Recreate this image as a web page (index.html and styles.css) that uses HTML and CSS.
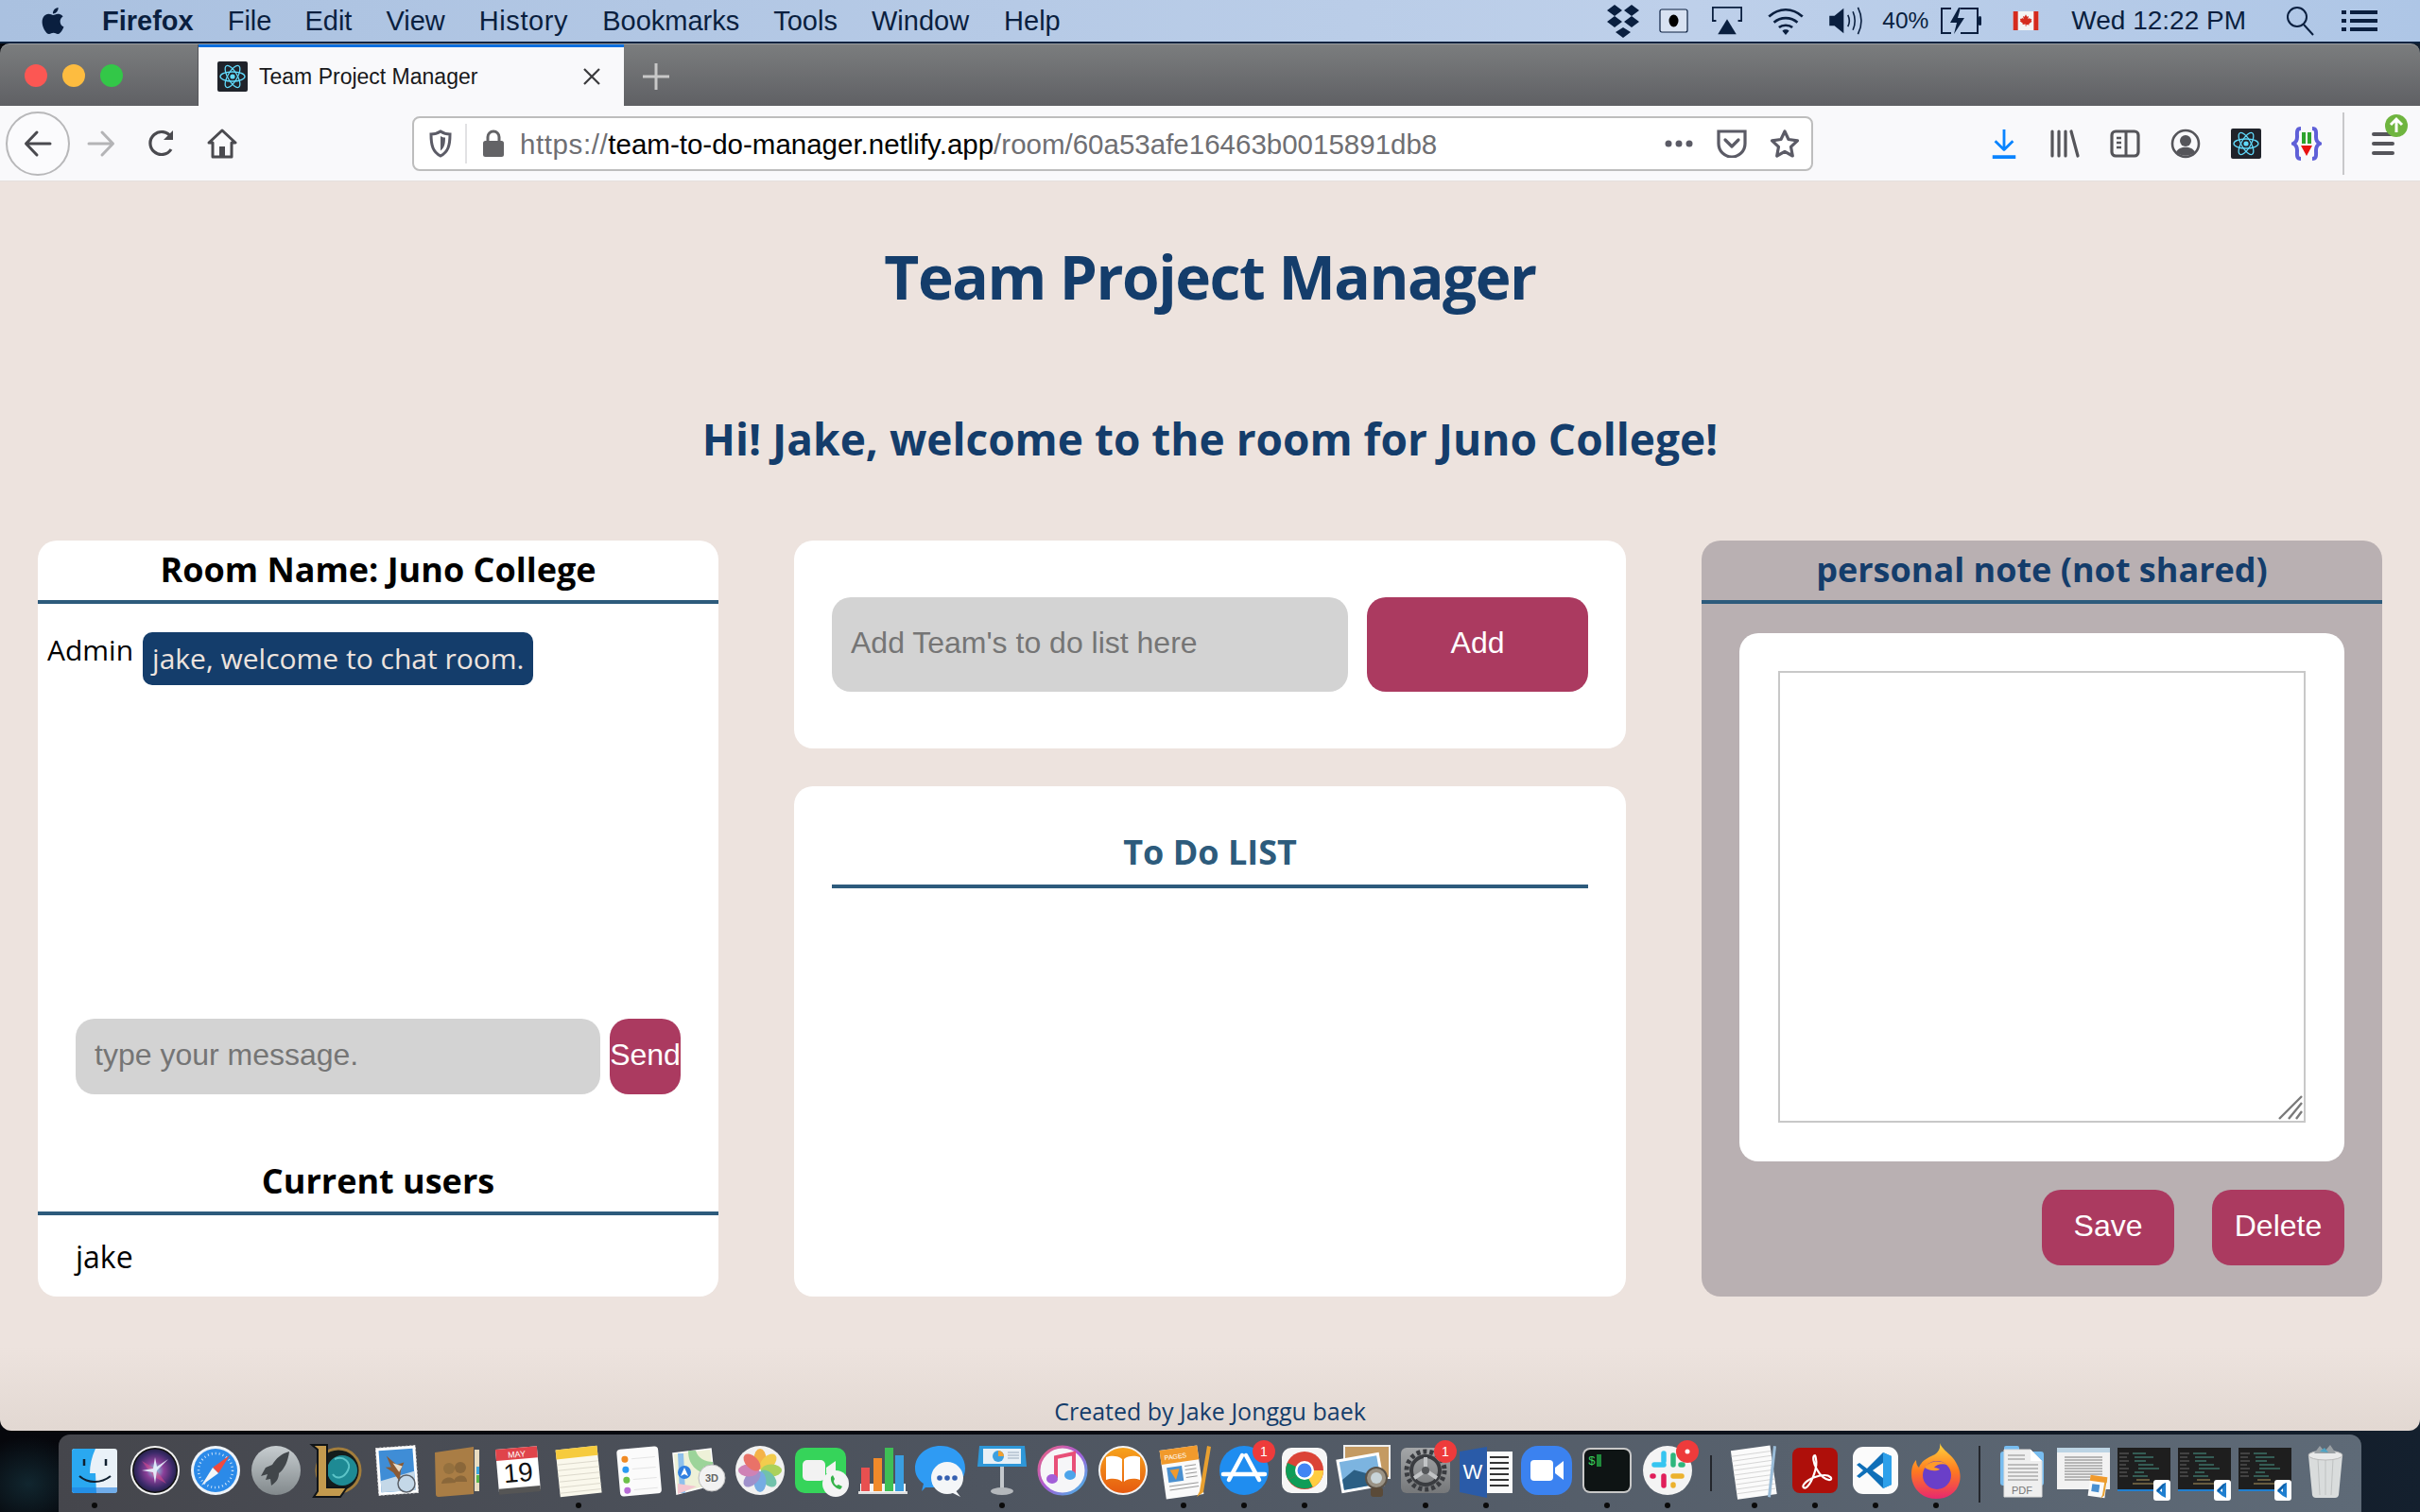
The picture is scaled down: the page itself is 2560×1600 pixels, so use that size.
FILE: index.html
```html
<!DOCTYPE html>
<html lang="en">
<head>
<meta charset="utf-8">
<title>Team Project Manager</title>
<link rel="stylesheet" href="styles.css">
</head>
<body>
<svg class="sprite" width="0" height="0" aria-hidden="true">
  <symbol id="react" viewBox="0 0 32 32">
    <rect width="32" height="32" rx="2" fill="#20232a"/>
    <g fill="none" stroke="#61dafb" stroke-width="1.3">
      <ellipse cx="16" cy="16" rx="13" ry="5"/>
      <ellipse cx="16" cy="16" rx="13" ry="5" transform="rotate(60 16 16)"/>
      <ellipse cx="16" cy="16" rx="13" ry="5" transform="rotate(120 16 16)"/>
    </g>
    <circle cx="16" cy="16" r="2.6" fill="#61dafb"/>
  </symbol>
  <symbol id="thumb" viewBox="0 0 64 64">
    <rect x="4" y="6" width="56" height="46" fill="#1e1e1e"/>
    <rect x="4" y="50" width="56" height="2" fill="#1f7fd0"/>
    <g stroke-width="1.2">
      <path d="M6 12h10M6 16h8M6 20h10M6 24h7M6 28h10M6 32h8M6 36h9" stroke="#666"/>
      <path d="M20 12h14M22 16h20M22 20h12M26 24h16M26 28h22M22 32h10M20 36h16" stroke="#4a9a8a"/>
      <path d="M24 40h14M20 44h22" stroke="#b09a60"/>
    </g>
    <rect x="42" y="40" width="18" height="22" rx="3" fill="#fff"/>
    <path d="M55 43v16l-4-2-6-5 2-2 4 3v-8z" fill="#1f7fd0"/>
    <path d="M55 43l-4 2-6 6 2 2 4-4z" fill="#0f5fa8"/>
  </symbol>
</svg>
<div class="screen">
  <header class="menubar">
    <svg class="apple" viewBox="0 0 24 24"><path d="M12.152 6.896c-.948 0-2.415-1.078-3.96-1.04-2.04.027-3.91 1.183-4.961 3.014-2.117 3.675-.546 9.103 1.519 12.09 1.013 1.454 2.208 3.09 3.792 3.039 1.52-.065 2.09-.987 3.935-.987 1.831 0 2.35.987 3.96.948 1.637-.026 2.676-1.48 3.676-2.948 1.156-1.688 1.636-3.325 1.662-3.415-.039-.013-3.182-1.221-3.22-4.857-.026-3.04 2.48-4.494 2.597-4.559-1.429-2.09-3.623-2.324-4.39-2.376-2-.156-3.675 1.09-4.61 1.09zM15.53 3.83c.843-1.012 1.4-2.427 1.245-3.83-1.207.052-2.662.805-3.532 1.818-.78.896-1.454 2.338-1.273 3.714 1.338.104 2.715-.688 3.559-1.701"/></svg>
    <nav class="menus">
      <span class="app-name">Firefox</span><span>File</span><span class="menu-edit">Edit</span><span>View</span><span class="menu-wide">History</span><span>Bookmarks</span><span>Tools</span><span class="menu-window">Window</span><span>Help</span>
    </nav>
    <div class="status">
      <svg class="st-dropbox" viewBox="0 0 36 36"><path d="M9 1l8 6-8 6-8-6zM27 1l8 6-8 6-8-6zM9 13l8 6-8 6-8-6zM27 13l8 6-8 6-8-6zM18 25l8 5-8 6-8-6z" fill="#0a1f3f"/></svg>
      <svg class="st-record" viewBox="0 0 32 32"><rect x="1" y="4" width="29" height="24" rx="2" fill="#d8e2f2" stroke="#0a1f3f" stroke-width="1.2"/><ellipse cx="15.500" cy="16" rx="5" ry="6.500" fill="#000"/></svg>
      <svg class="st-airplay" viewBox="0 0 40 36"><path d="M7 25H3V9h34v16h-4" transform="translate(0 -7)" fill="none" stroke="#0a1f3f" stroke-width="2"/><path d="M20 16l11 18H9z" fill="#0a1f3f"/></svg>
      <svg class="st-wifi" viewBox="0 0 44 36" fill="none" stroke="#0a1f3f" stroke-width="3"><path d="M2 13c12-11 28-11 40 0M8 20c8-7 20-7 28 0M14 26c4-3.500 12-3.500 16 0"/><path d="M22 35l-4-5c2-2 6-2 8 0z" fill="#0a1f3f" stroke="none"/></svg>
      <svg class="st-volume" viewBox="0 0 44 36" fill="none" stroke="#0a1f3f" stroke-width="1.800"><path d="M2 12h6l11-9v30l-11-9H2z" fill="#0a1f3f" stroke="none"/><path d="M24 11c2 4 2 10 0 14M30 7c3 7 3 15 0 22M36 2c5 10 5 22 0 32"/></svg>
      <span class="st-pct">40%</span>
      <svg class="st-battery" viewBox="0 0 44 30"><path d="M12 2H2v26h10M22 2h18v26H22" fill="none" stroke="#0a1f3f" stroke-width="2"/><path d="M20 1L11 17h7l-3 12 11-17h-7l3-11z" fill="#0a1f3f"/><rect x="41" y="10" width="3" height="10" rx="1.500" fill="#0a1f3f"/></svg>
      <svg class="st-flag" viewBox="0 0 32 24"><rect width="32" height="24" fill="#f4f4f4"/><rect width="6" height="24" fill="#d52b1e"/><rect x="26" width="6" height="24" fill="#d52b1e"/><path d="M16 4l1.500 3 2-1-.7 4 2.200-1.500.6 1.500 2-.3-.8 2.300 1 .8-3.800 3 .4 1.500-3.800-.5V19h-1v-2.700l-3.800.5.4-1.500-3.800-3 1-.8-.8-2.300 2 .3.6-1.500L13.200 10l-.7-4 2 1z" fill="#d52b1e"/></svg>
      <span class="st-clock">Wed 12:22 PM</span>
      <svg class="st-search" viewBox="0 0 32 32" fill="none" stroke="#0a1f3f" stroke-width="2"><circle cx="13" cy="12" r="10"/><path d="M20 20l10 11"/></svg>
      <svg class="st-list" viewBox="0 0 38 24" fill="#0a1f3f"><rect y="1" width="5" height="4"/><rect x="9" y="1" width="29" height="4"/><rect y="10" width="5" height="4"/><rect x="9" y="10" width="29" height="4"/><rect y="19" width="5" height="4"/><rect x="9" y="19" width="29" height="4"/></svg>
    </div>
  </header>

  <div class="tabstrip">
    <div class="traffic"><i class="light red"></i><i class="light yellow"></i><i class="light green"></i></div>
    <div class="tab">
      <svg class="favicon"><use href="#react"/></svg>
      <span class="tab-title">Team Project Manager</span>
      <svg class="tab-close" viewBox="0 0 20 20" fill="none" stroke="#3a3a3c" stroke-width="2.200"><path d="M2 2l16 16M18 2L2 18"/></svg>
    </div>
    <svg class="newtab" viewBox="0 0 28 28" stroke="#c8c8c8" stroke-width="3"><path d="M14 0v28M0 14h28"/></svg>
  </div>

  <div class="toolbar">
    <div class="navbtn back"><svg viewBox="0 0 32 32" fill="none" stroke="#4a4a4f" stroke-width="3" stroke-linecap="round" stroke-linejoin="round"><path d="M29 16H4M15 4L3.500 16 15 28"/></svg></div>
    <div class="navbtn"><svg viewBox="0 0 32 32" fill="none" stroke="#b4b4b6" stroke-width="3" stroke-linecap="round" stroke-linejoin="round"><path d="M3 16h25M17 4l11.500 12L17 28"/></svg></div>
    <div class="navbtn"><svg viewBox="0 0 32 32" fill="none" stroke="#4a4a4f" stroke-width="3.200"><path d="M26 22a12 12 0 1 1 0-13"/><path d="M28 2v10H18z" fill="#4a4a4f" stroke="none"/></svg></div>
    <div class="navbtn"><svg viewBox="0 0 32 32" fill="none" stroke="#4a4a4f" stroke-width="3" stroke-linejoin="round"><path d="M2 15L16 2l14 13h-4v15H6V15z"/><rect x="13" y="19" width="6" height="10" fill="#4a4a4f" stroke="none"/></svg></div>
    <div class="urlbar">
      <svg class="shield" viewBox="0 0 24 30"><path d="M12 2c3 2 6 3 10 3 0 12-2 19-10 23C4 24 2 17 2 5c4 0 7-1 10-3z" fill="none" stroke="#5b5b66" stroke-width="3"/><path d="M12 7c2 1 3 1.500 5 1.500 0 7-1 11-5 14z" fill="#5b5b66"/></svg>
      <i class="url-sep"></i>
      <svg class="lock" viewBox="0 0 24 30"><rect x="1" y="12" width="22" height="17" rx="2.500" fill="#636366"/><path d="M6 13V8a6 6 0 0 1 12 0v5" fill="none" stroke="#636366" stroke-width="3"/></svg>
      <span class="url"><span class="url-dim url-scheme">https://</span>team-to-do-manager.netlify.app<span class="url-dim">/room/60a53afe16463b0015891db8</span></span>
      <svg class="url-dots" viewBox="0 0 32 10" fill="#5b5b66"><circle cx="5" cy="5" r="3.500"/><circle cx="16" cy="5" r="3.500"/><circle cx="27" cy="5" r="3.500"/></svg>
      <svg class="pocket" viewBox="0 0 32 30" fill="none" stroke="#5b5b66" stroke-width="3.200"><path d="M2 2h28v13a14 14 0 0 1-28 0z"/><path d="M9 11l7 7 7-7" stroke-linecap="round" stroke-linejoin="round"/></svg>
      <svg class="star" viewBox="0 0 32 32" fill="none" stroke="#5b5b66" stroke-width="3.200" stroke-linejoin="round"><path d="M16 3l4 8.500 9.500 1.300-7 6.500 1.800 9.700-8.300-4.700L7.700 29l1.800-9.700-7-6.500L12 11.500z"/></svg>
    </div>
    <div class="tools">
      <div class="toolbtn"><svg viewBox="0 0 32 34" fill="none" stroke="#0a84ff" stroke-width="3"><path d="M16 1v23M6 14l10 10 10-10" stroke-linejoin="round"/><path d="M3 32h26" stroke-width="4"/></svg></div>
      <div class="toolbtn"><svg viewBox="0 0 32 32" stroke="#55555a" stroke-width="3.200" stroke-linecap="round"><path d="M3 3v26M10 3v26M17 3v26M23 3l7 26"/></svg></div>
      <div class="toolbtn"><svg viewBox="0 0 32 32" fill="none"><rect x="2" y="3" width="28" height="26" rx="4" stroke="#55555a" stroke-width="3.200"/><path d="M17 3v26" stroke="#55555a" stroke-width="3"/><path d="M7 10h5M7 15h5M7 20h5" stroke="#55555a" stroke-width="2.400"/></svg></div>
      <div class="toolbtn"><svg viewBox="0 0 32 32" fill="none"><circle cx="16" cy="16" r="14" stroke="#55555a" stroke-width="2.600"/><circle cx="16" cy="13" r="6" fill="#55555a"/><path d="M6 25c3-7 17-7 20 0-5 5-15 5-20 0z" fill="#55555a"/></svg></div>
      <div class="toolbtn"><svg class="ext-react"><use href="#react"/></svg></div>
      <div class="toolbtn"><svg class="ext-braces" viewBox="0 0 32 36" fill="none"><path d="M10 2C5 2 6 6 6 11s-4 7-4 7 4 2 4 7 -1 9 4 9M22 2c5 0 4 4 4 9s4 7 4 7-4 2-4 7 1 9-4 9" stroke="#5f60d8" stroke-width="4"/><rect x="11" y="6" width="4" height="12" fill="#2da32d"/><rect x="17" y="6" width="4" height="12" fill="#2da32d"/><path d="M10 20h12l-6 11z" fill="#e81010"/></svg></div>
      <i class="tool-sep"></i>
      <div class="menu-btn">
        <svg viewBox="0 0 26 32" fill="#55555a"><rect x="1" y="4" width="24" height="4" rx="2"/><rect x="1" y="14" width="24" height="4" rx="2"/><rect x="1" y="24" width="24" height="4" rx="2"/></svg>
        <svg class="update" viewBox="0 0 24 24"><circle cx="12" cy="12" r="12" fill="#6fb53f"/><path d="M12 19V6M6 11l6-6 6 6" fill="none" stroke="#fff" stroke-width="3"/></svg>
      </div>
    </div>
  </div>

  <main class="page">
    <h1 class="title">Team Project Manager</h1>
    <h2 class="welcome">Hi! Jake, welcome to the room for Juno College!</h2>
    <section class="board">
      <div class="card chat">
        <h3 class="panel-head">Room Name: Juno College</h3>
        <div class="messages">
          <div class="msg"><span class="sender">Admin</span><span class="bubble">jake, welcome to chat room.</span></div>
        </div>
        <form class="send-row">
          <input class="field" type="text" placeholder="type your message.">
          <button class="btn send" type="button">Send</button>
        </form>
        <h3 class="panel-head users-head">Current users</h3>
        <ul class="users"><li>jake</li></ul>
      </div>
      <div class="middle">
        <div class="card add-card">
          <input class="field add-field" type="text" placeholder="Add Team's to do list here">
          <button class="btn add" type="button">Add</button>
        </div>
        <div class="card todo-card">
          <h3 class="todo-head">To Do LIST</h3>
        </div>
      </div>
      <div class="card note">
        <h3 class="panel-head note-head">personal note (not shared)</h3>
        <div class="note-box">
          <textarea class="note-text"></textarea>
          <svg class="grip" viewBox="0 0 26 26" fill="none" stroke="#7a7a7a" stroke-width="2.400"><path d="M1 25L25 1M11 25L25 8M19 25l6-8"/></svg>
        </div>
        <div class="note-actions">
          <button class="btn note-btn" type="button">Save</button>
          <button class="btn note-btn" type="button">Delete</button>
        </div>
      </div>
    </section>
    <footer class="credit">Created by Jake Jonggu baek</footer>
  </main>

  <div class="desk">
    <div class="dock">
      <div class="dock-item on"><svg viewBox="0 0 64 64"><rect x="8" y="7" width="48" height="47" rx="3" fill="#e9f1f8"/><path d="M11 7h22c-4 9-6 17-6 26h6l1 21H11a3 3 0 0 1-3-3V10a3 3 0 0 1 3-3z" fill="#2aa8f0"/><path d="M8 48h48v3a3 3 0 0 1-3 3H11a3 3 0 0 1-3-3z" fill="#1f7fe0" opacity=".6"/><path d="M21 18v7M44 18v7" stroke="#102030" stroke-width="2.500"/><path d="M16 36c9 8 23 8 33 0" fill="none" stroke="#102030" stroke-width="2.200"/></svg></div>
      <div class="dock-item"><svg viewBox="0 0 64 64"><defs><radialGradient id="siri" cx=".5" cy=".5" r=".6"><stop offset="0" stop-color="#8ad8e8"/><stop offset=".35" stop-color="#8b3f98"/><stop offset=".7" stop-color="#3a2a68"/><stop offset="1" stop-color="#15192f"/></radialGradient></defs><circle cx="32" cy="30" r="26" fill="#f2f2f2"/><circle cx="32" cy="30" r="24" fill="#111"/><circle cx="32" cy="30" r="22.500" fill="url(#siri)"/><path d="M18 20l14 8 12 16-14-8z" fill="#d84b8c" opacity=".55"/><path d="M46 18L34 30l-2 14-2-12-12-2 12-2 2-12 2 10z" fill="#e8f4ff" opacity=".9"/></svg></div>
      <div class="dock-item"><svg viewBox="0 0 64 64"><circle cx="32" cy="30" r="26" fill="#eef3f8"/><circle cx="32" cy="30" r="23" fill="#2b8ae8"/><circle cx="32" cy="30" r="18" fill="none" stroke="#cfe4fa" stroke-width="2.500" stroke-dasharray="1 3"/><path d="M47 14L35 33 29 27z" fill="#ef4a3f"/><path d="M17 46l12-19 6 6z" fill="#f4f6f8"/></svg></div>
      <div class="dock-item"><svg viewBox="0 0 64 64"><defs><linearGradient id="lp" x1="0" y1="0" x2="0" y2="1"><stop offset="0" stop-color="#c7cdd0"/><stop offset="1" stop-color="#82898c"/></linearGradient></defs><circle cx="32" cy="30" r="26" fill="url(#lp)"/><path d="M46 10c-8 2-14 7-18 14l-7 3-5 9 7-2-2 6 5-1 1 7c6-4 8-8 8-13 6-4 10-14 11-23z" fill="#41464a"/></svg></div>
      <div class="dock-item"><svg viewBox="0 0 64 64"><circle cx="34" cy="30" r="23" fill="#141c1c" stroke="#a27d3c" stroke-width="3"/><circle cx="38" cy="30" r="16" fill="#1e8a94"/><path d="M30 18c10-4 18 4 14 12s-12 10-16 4" fill="none" stroke="#5cc4c8" stroke-width="2"/><path d="M6 3h16v45h21l-7 10H8l4-6V8z" fill="#c39a4e" stroke="#101418" stroke-width="2"/></svg></div>
      <div class="dock-item"><svg viewBox="0 0 64 64"><g transform="rotate(-4 32 30)"><rect x="11" y="5" width="42" height="50" fill="#fff" stroke="#ddd" stroke-dasharray="2 2"/><rect x="14" y="8" width="36" height="44" fill="#3f8dd6"/><path d="M14 40l36-8v20H14z" fill="#c4d8e8"/><path d="M22 14l10 10 8-2-4 8-2 12-6-10-8-6 6 0z" fill="#8a5a34"/><path d="M28 22l10 4-4 6z" fill="#e8dcc8"/></g><circle cx="42" cy="44" r="9" fill="none" stroke="#5a6068" stroke-width="1.500"/></svg></div>
      <div class="dock-item"><svg viewBox="0 0 64 64"><path d="M50 8h5v44h-5z" fill="#e8dcc0"/><rect x="52" y="26" width="3" height="8" fill="#3ba7e0"/><rect x="52" y="35" width="3" height="8" fill="#5ab84a"/><path d="M8 11l41-6v50L12 58a3 3 0 0 1-3-3z" fill="#a97d45"/><circle cx="23" cy="28" r="6" fill="#94703e"/><circle cx="35" cy="27" r="6" fill="#8a673a"/><path d="M15 44c1-8 13-9 15-1zM28 42c1-8 14-9 14 0z" fill="#8a673a"/></svg></div>
      <div class="dock-item"><svg viewBox="0 0 64 64"><g transform="rotate(-5 32 30)"><rect x="10" y="6" width="44" height="46" fill="#fff"/><rect x="10" y="6" width="44" height="12" fill="#e0444a"/><text class="cal-m" x="32" y="16" text-anchor="middle">MAY</text><text class="cal-d" x="32" y="42" text-anchor="middle">19</text><rect x="10" y="48" width="44" height="6" fill="#555"/></g></svg></div>
      <div class="dock-item on"><svg viewBox="0 0 64 64"><g transform="rotate(-6 32 30)"><rect x="10" y="6" width="44" height="50" fill="#faf8ec"/><rect x="10" y="6" width="44" height="10" fill="#f6cb3d"/><path d="M10 22h44M10 28h44M10 34h44M10 40h44M10 46h44M10 52h44" stroke="#dcd9cc" stroke-width="1"/></g></svg></div>
      <div class="dock-item"><svg viewBox="0 0 64 64"><g transform="rotate(-5 32 30)"><rect x="10" y="6" width="44" height="50" rx="4" fill="#fbfbfb"/><circle cx="18" cy="17" r="3.500" fill="#f08a24"/><circle cx="18" cy="28" r="3.500" fill="#2b9af3"/><circle cx="18" cy="39" r="3.500" fill="#6cc04a"/><circle cx="18" cy="50" r="3.500" fill="#b76cd6"/><path d="M25 17h25M25 28h25M25 39h25M25 50h25" stroke="#e4e4e4"/></g></svg></div>
      <div class="dock-item"><svg viewBox="0 0 64 64"><path d="M4 12l40-5 4 38-40 10z" fill="#eef1d8" stroke="#fff" stroke-width="1.500"/><path d="M28 9c2 8 10 12 18 12v14c-14-2-26-8-26-26z" fill="#9cd49a"/><path d="M9 12h6l2 42H11z" fill="#8dc0ec"/><path d="M9 44l20 3-20 8z" fill="#f4c6d0"/><circle cx="16" cy="32" r="7" fill="#2f7fe0"/><path d="M16 27l4 9-4-2-4 2z" fill="#fff"/><circle cx="45" cy="38" r="14" fill="#f2f2f2" stroke="#bbb"/><text class="map-3d" x="45" y="42" text-anchor="middle">3D</text></svg></div>
      <div class="dock-item"><svg viewBox="0 0 64 64"><circle cx="32" cy="30" r="26" fill="#f1f1f1"/><g opacity=".82"><ellipse cx="32" cy="18" rx="6.500" ry="11" fill="#f5a623"/><ellipse cx="32" cy="18" rx="6.500" ry="11" fill="#f3c52a" transform="rotate(45 32 30)"/><ellipse cx="32" cy="18" rx="6.500" ry="11" fill="#9ccb3b" transform="rotate(90 32 30)"/><ellipse cx="32" cy="18" rx="6.500" ry="11" fill="#56b89c" transform="rotate(135 32 30)"/><ellipse cx="32" cy="18" rx="6.500" ry="11" fill="#5a9ee0" transform="rotate(180 32 30)"/><ellipse cx="32" cy="18" rx="6.500" ry="11" fill="#8e7cc3" transform="rotate(225 32 30)"/><ellipse cx="32" cy="18" rx="6.500" ry="11" fill="#c86aa8" transform="rotate(270 32 30)"/><ellipse cx="32" cy="18" rx="6.500" ry="11" fill="#e8574a" transform="rotate(315 32 30)"/></g></svg></div>
      <div class="dock-item"><svg viewBox="0 0 64 64"><rect x="5" y="6" width="54" height="48" rx="10" fill="#36d45a"/><rect x="13" y="19" width="24" height="22" rx="5" fill="#f2f2f2"/><path d="M38 27l10-7v20l-10-7z" fill="#f2f2f2"/><circle cx="48" cy="44" r="14" fill="#f4f4f4"/><path d="M43 37c-1 6 4 12 10 13l2-3-4-2-2 1c-2-1-3-3-3-5l1-2-2-4z" fill="#35b34a"/></svg></div>
      <div class="dock-item"><svg viewBox="0 0 64 64"><rect x="8" y="52" width="52" height="3" fill="#ddd"/><rect x="10" y="44" width="48" height="9" fill="#f4f4f4"/><rect x="11" y="27" width="9" height="25" fill="#e85050"/><rect x="24" y="17" width="9" height="35" fill="#f08a2a"/><rect x="36" y="6" width="9" height="46" fill="#3fbf55"/><rect x="47" y="14" width="9" height="38" fill="#3a9ee0"/></svg></div>
      <div class="dock-item"><svg viewBox="0 0 64 64"><path d="M31 4c15 0 26 10 26 24 0 8-5 16-12 20l-30 0L11 52l2-8C7 40 4 34 4 28 4 14 16 4 31 4z" fill="#2f9bf3"/><circle cx="38" cy="38" r="17" fill="#f4f6f8"/><path d="M46 50l6 8-10-5z" fill="#f4f6f8"/><circle cx="30" cy="38" r="2.800" fill="#3560b0"/><circle cx="38" cy="38" r="2.800" fill="#3560b0"/><circle cx="46" cy="38" r="2.800" fill="#3560b0"/></svg></div>
      <div class="dock-item on"><svg viewBox="0 0 64 64"><path d="M8 4h48l2 22H6z" fill="#2e97d8"/><rect x="12" y="7" width="40" height="16" fill="#e8f0f6"/><circle cx="28" cy="15" r="6" fill="#3ca0e0"/><path d="M28 15V9a6 6 0 0 1 6 6z" fill="#f0a030"/><path d="M38 11h12M38 14h12M38 17h12" stroke="#9ab"/><rect x="30" y="26" width="4" height="24" fill="#c4c8cc"/><ellipse cx="32" cy="52" rx="12" ry="4" fill="#b4b8bc"/></svg></div>
      <div class="dock-item"><svg viewBox="0 0 64 64"><defs><linearGradient id="itb" x1="0" y1="0" x2="1" y2="1"><stop offset="0" stop-color="#f0637c"/><stop offset=".5" stop-color="#a65bd8"/><stop offset="1" stop-color="#3fc0e8"/></linearGradient></defs><circle cx="32" cy="30" r="25" fill="#f6f6f8" stroke="url(#itb)" stroke-width="3"/><path d="M25 38V16l19-4v23" fill="none" stroke="#e84f78" stroke-width="4"/><ellipse cx="21" cy="39" rx="6" ry="5" fill="#a35fd8"/><ellipse cx="40" cy="35" rx="6" ry="5" fill="#4ca4ea"/></svg></div>
      <div class="dock-item"><svg viewBox="0 0 64 64"><defs><linearGradient id="bk" x1="0" y1="0" x2="0" y2="1"><stop offset="0" stop-color="#f7a21b"/><stop offset="1" stop-color="#e65a10"/></linearGradient></defs><circle cx="32" cy="30" r="26" fill="#f4f4f4"/><circle cx="32" cy="30" r="24" fill="url(#bk)"/><path d="M31 18c-4-4-12-4-17-2v24c5-2 13-2 17 2zM33 18c4-4 12-4 17-2v24c-5-2-13-2-17 2z" fill="#fff"/></svg></div>
      <div class="dock-item on"><svg viewBox="0 0 64 64"><g transform="rotate(-8 30 32)"><rect x="10" y="6" width="40" height="52" fill="#fafafa"/><rect x="10" y="6" width="40" height="15" fill="#f19a2c"/><text class="pages-t" x="14" y="17">PAGES</text><rect x="15" y="25" width="16" height="16" fill="#4a90d0"/><path d="M18 28h10l-5 11z" fill="#f19a2c"/><path d="M34 26h12M34 30h12M34 34h12M34 38h12M15 45h31M15 49h31" stroke="#999"/></g><path d="M46 58l3-6 8-48 4 1-8 48z" fill="#e8a030"/></svg></div>
      <div class="dock-item on"><svg viewBox="0 0 64 64"><circle cx="32" cy="30" r="26" fill="#1f8df0"/><path d="M30 14l-14 26M34 14l14 26M10 34h44" stroke="#fff" stroke-width="4.500" stroke-linecap="round"/><circle cx="53" cy="10" r="12" fill="#ee3b3b"/><text class="badge-t" x="53" y="15" text-anchor="middle">1</text></svg></div>
      <div class="dock-item on"><svg viewBox="0 0 64 64"><rect x="8" y="6" width="48" height="48" rx="10" fill="#f6f6f6"/><circle cx="32" cy="30" r="20" fill="#db4437"/><path d="M32 30L14.700 40A20 20 0 0 1 14 22z" fill="#0f9d58"/><path d="M15 40l17-10 9 17A20 20 0 0 1 15 40z" fill="#0f9d58"/><path d="M32 30h20a20 20 0 0 1-11 18z" fill="#ffcd40"/><circle cx="32" cy="30" r="10" fill="#fff"/><circle cx="32" cy="30" r="7.500" fill="#4285f4"/></svg></div>
      <div class="dock-item"><svg viewBox="0 0 64 64"><rect x="10" y="4" width="48" height="34" fill="#c49a62" stroke="#eee" stroke-width="2"/><g transform="rotate(-10 30 32)"><rect x="4" y="14" width="46" height="36" fill="#fff"/><rect x="7" y="17" width="40" height="30" fill="#7cb4e0"/><path d="M7 36l14-8 26 12v7H7z" fill="#2c5f84"/></g><circle cx="44" cy="38" r="11" fill="#9a9284" stroke="#5a5248" stroke-width="2"/><circle cx="44" cy="38" r="6" fill="#c8d4d8"/><rect x="38" y="48" width="13" height="10" rx="3" fill="#5a4a38"/></svg></div>
      <div class="dock-item on"><svg viewBox="0 0 64 64"><defs><linearGradient id="pf" x1="0" y1="0" x2="0" y2="1"><stop offset="0" stop-color="#a4a6a8"/><stop offset="1" stop-color="#76787a"/></linearGradient></defs><rect x="6" y="6" width="52" height="48" rx="6" fill="url(#pf)"/><circle cx="32" cy="30" r="20" fill="none" stroke="#3a3c40" stroke-width="5" stroke-dasharray="4 3"/><circle cx="32" cy="30" r="15" fill="none" stroke="#3a3c40" stroke-width="4"/><path d="M32 30V16M32 30L20 38M32 30l12 8" stroke="#c2c4c6" stroke-width="4"/><circle cx="32" cy="30" r="4" fill="#55575a"/><circle cx="53" cy="10" r="12" fill="#ee3b3b"/><text class="badge-t" x="53" y="15" text-anchor="middle">1</text></svg></div>
      <div class="dock-item on"><svg viewBox="0 0 64 64"><rect x="30" y="10" width="30" height="44" fill="#fafafa"/><path d="M36 16h20M36 22h20M36 28h20M36 34h20M36 40h20M36 46h20" stroke="#333" stroke-width="2"/><path d="M4 10l29-5v54L4 53z" fill="#2a5ba8"/><text class="word-t" x="18" y="39" text-anchor="middle">W</text></svg></div>
      <div class="dock-item"><svg viewBox="0 0 64 64"><rect x="5" y="4" width="54" height="52" rx="18" fill="#3b82f0"/><rect x="15" y="19" width="24" height="22" rx="4" fill="#fff"/><path d="M41 27l9-7v20l-9-7z" fill="#fff"/></svg></div>
      <div class="dock-item on"><svg viewBox="0 0 64 64"><rect x="6" y="6" width="52" height="48" rx="8" fill="#c8c8c8"/><rect x="8" y="8" width="48" height="44" rx="6" fill="#0e1414"/><text class="term-t" x="12" y="24">$</text><rect x="21" y="13" width="5" height="13" fill="#1f8a3a"/></svg></div>
      <div class="dock-item on"><svg viewBox="0 0 64 64"><circle cx="32" cy="30" r="26" fill="#f4f4f4"/><g stroke-width="5.500" stroke-linecap="round"><path d="M28 12v8M18 24h10" stroke="#36c5f0"/><path d="M38 14v10M48 24h-2" stroke="#2eb67d"/><path d="M47 36H38M38 46v-1" stroke="#ecb22e"/><path d="M28 36v10M16 36h1" stroke="#e01e5a"/></g><circle cx="53" cy="10" r="12" fill="#ee3b3b"/><circle cx="53" cy="10" r="2.500" fill="#fff"/></svg></div>
      <i class="dock-sep short"></i>
      <div class="dock-item on"><svg viewBox="0 0 64 64"><g transform="rotate(-8 32 30)"><rect x="10" y="6" width="42" height="52" fill="#fbfbfb"/><path d="M10 12h42M10 17h42M10 22h42M10 27h42M10 32h42M10 37h42M10 42h42M10 47h42M10 52h42" stroke="#d6d6d6"/></g><path d="M46 58l6-54 3 .5-6 54z" fill="#9abcd8"/></svg></div>
      <div class="dock-item on"><svg viewBox="0 0 64 64"><rect x="8" y="6" width="48" height="48" rx="8" fill="#ae0f0a"/><path d="M32 14c-3 0-2 8 2 15 3 6 10 12 14 11 3-1 0-5-6-5-7 0-18 4-22 10-2 3 1 5 4 2 5-5 11-21 9-29-.2-2-.4-4-1-4z" fill="none" stroke="#fff" stroke-width="2.200"/></svg></div>
      <div class="dock-item on"><svg viewBox="0 0 64 64"><rect x="8" y="5" width="48" height="50" rx="11" fill="#fbfbfb"/><path d="M40 11L23 28l-8-6-3 2 7 6-7 6 3 2 8-6 17 17 9-4V15z" fill="#0f6fb8"/><path d="M40 11l9 4v30l-9 4z" fill="#2da0ea"/><path d="M40 22L29 30l11 8z" fill="#fbfbfb"/></svg></div>
      <div class="dock-item on"><svg viewBox="0 0 64 64"><defs><linearGradient id="ffx" x1="0" y1="0" x2="0" y2="1"><stop offset="0" stop-color="#ffd53d"/><stop offset=".5" stop-color="#ff7a1f"/><stop offset="1" stop-color="#e8286f"/></linearGradient></defs><path d="M36 1c2 6 8 9 14 16 6 8 9 16 7 25-3 12-13 18-25 18C18 60 6 50 6 34c0-7 2-12 5-15 0 4 1 6 3 8 2-7 10-11 17-14 4-3 6-7 5-12z" fill="url(#ffx)"/><circle cx="33" cy="35" r="15" fill="#6a3fc8"/><path d="M20 27c4-7 16-9 24-3-6-2-12 0-14 3 3 0 5 1 6 2-4 2-10 2-16-2z" fill="#ff9a2a"/></svg></div>
      <i class="dock-sep"></i>
      <div class="dock-item"><svg viewBox="0 0 64 64"><rect x="8" y="10" width="46" height="36" rx="3" fill="#78bdf0"/><rect x="12" y="4" width="16" height="8" rx="2" fill="#78bdf0"/><path d="M12 8h28l12 12v38H12z" fill="#efefef" stroke="#ddd"/><path d="M40 8v12h12z" fill="#fff"/><path d="M16 14h18M16 18h18M16 24h32M16 28h32M16 32h32M16 36h32M16 40h32" stroke="#8a8a8a"/><text class="pdf-t" x="31" y="55" text-anchor="middle">PDF</text></svg></div>
      <div class="dock-item"><svg viewBox="0 0 64 64"><rect x="4" y="6" width="56" height="44" fill="#f2f2f2"/><rect x="4" y="6" width="56" height="5" fill="#bcd4e4"/><path d="M12 16h40M12 19h40M12 22h40M12 25h40M12 28h40M12 31h40M12 34h40M12 37h40M12 40h30" stroke="#7a7a7a"/><g transform="rotate(8 47 47)"><rect x="38" y="36" width="18" height="22" fill="#fafafa"/><rect x="38" y="36" width="18" height="6" fill="#f19a2c"/><rect x="41" y="45" width="8" height="8" fill="#4a90d0"/></g><path d="M50 60l2-4 3-18 2 .5-3 18z" fill="#e8a030"/></svg></div>
      <div class="dock-item"><svg><use href="#thumb"/></svg></div>
      <div class="dock-item"><svg><use href="#thumb"/></svg></div>
      <div class="dock-item"><svg><use href="#thumb"/></svg></div>
      <div class="dock-item"><svg viewBox="0 0 64 64"><path d="M14 14h36l-4 42a4 4 0 0 1-4 3H22a4 4 0 0 1-4-3z" fill="#d9dcdc"/><path d="M24 18l2 38M32 18v38M40 18l-2 38" stroke="#bfc2c2"/><ellipse cx="32" cy="14" rx="18" ry="5" fill="#e9eaea" stroke="#bbb"/><path d="M20 12l6-8 5 6 6-7 6 9z" fill="#9aa0a4"/><path d="M26 10l5-4 4 5z" fill="#4ca4c4"/></svg></div>
    </div>
  </div>
</div>
</body>
</html>
```

FILE: styles.css
```css
* { box-sizing: border-box; }
html, body { margin: 0; padding: 0; }
body { background: #0a0c14; font-family: "Liberation Sans", Arial, sans-serif; }
.sprite { position: absolute; }
.screen { width: 2560px; height: 1600px; display: flex; flex-direction: column; overflow: hidden;
  background: radial-gradient(ellipse 60px 50px at 30px 1570px, #11262f 0%, rgba(13,20,32,0) 100%), linear-gradient(90deg, #06070c 0%, #0a0c14 60%, #14202e 100%); }

/* menu bar */
.menubar { height: 46px; flex: none; display: flex; align-items: center; padding: 0 45px 0 42px; color: #0a1f3f; font-size: 29px;
  background: linear-gradient(90deg, #aac1e0, #bed0ea 70%, #aec6e6); border-bottom: 2px solid #0c2340; }
.apple { width: 28px; height: 32px; fill: #0a1f3f; flex: none; }
.menus { display: flex; gap: 36px; margin-left: 38px; }
.app-name { font-weight: 700; }
.menu-edit { margin-left: -1px; }
.menu-wide { letter-spacing: .6px; }
.menu-window { margin-right: 1px; }
.status { margin-left: auto; display: flex; align-items: center; gap: 20px; }
.status svg { display: block; flex: none; }
.st-dropbox { width: 36px; height: 36px; }
.st-record { width: 32px; height: 32px; }
.st-airplay { width: 40px; height: 32px; }
.st-wifi { width: 44px; height: 32px; }
.st-volume { width: 44px; height: 32px; }
.st-pct { font-size: 24.500px; margin-left: -4px; }
.st-battery { width: 44px; height: 30px; margin-left: -8px; }
.st-flag { width: 32px; height: 20px; margin-left: 11px; }
.st-clock { font-size: 28px; margin-left: 12px; }
.st-search { width: 32px; height: 32px; margin-left: 21px; }
.st-list { width: 38px; height: 24px; margin-left: 8px; }

/* tab strip */
.tabstrip { height: 66px; flex: none; display: flex; align-items: stretch; background: linear-gradient(#7b7d7e, #5f6064);
  border-radius: 10px 10px 0 0; border-top: 1px solid #9a9c9e; }
.traffic { width: 210px; flex: none; display: flex; align-items: center; gap: 16px; padding-left: 26px; border-right: 1px solid #55565a; }
.light { width: 24px; height: 24px; border-radius: 50%; display: block; }
.red { background: #fc5753; }
.yellow { background: #fdbc40; }
.green { background: #33c748; }
.tab { width: 450px; flex: none; display: flex; align-items: center; padding: 0 24px 0 20px; background: #f9f9fb; border-top: 3px solid #0a6fe0; }
.favicon { width: 32px; height: 32px; flex: none; }
.tab-title { margin-left: 12px; font-size: 23px; color: #18181a; flex: 1; }
.tab-close { width: 20px; height: 20px; flex: none; }
.newtab { width: 28px; height: 28px; margin: 20px 0 0 20px; flex: none; }

/* toolbar */
.toolbar { height: 80px; flex: none; display: flex; align-items: center; padding-left: 8px; background: #f9f9fb; border-bottom: 1px solid #e4e0de; }
.navbtn { width: 64px; height: 64px; flex: none; display: flex; align-items: center; justify-content: center; }
.navbtn svg { width: 32px; height: 32px; }
.back { width: 68px; height: 68px; margin: 0 1px 0 -2px; border: 2px solid #b8b8ba; border-radius: 50%; background: #fbfbfd; }
.urlbar { width: 1482px; height: 58px; margin-left: 169px; flex: none; display: flex; align-items: center; background: #fff; border: 2px solid #bdbdbd; border-radius: 8px; padding-left: 16px; }
.shield { width: 24px; height: 30px; flex: none; }
.url-sep { width: 2px; height: 42px; margin-left: 14px; background: #e2e2e4; display: block; }
.lock { width: 24px; height: 30px; margin-left: 16px; flex: none; }
.url { margin-left: 16px; padding-top: 2px; font-size: 29.500px; color: #000; white-space: nowrap; flex: 1; }
.url-dim { color: #6f6f73; }
.url-scheme { letter-spacing: .6px; }
.url-dots { width: 32px; height: 10px; flex: none; }
.pocket { width: 32px; height: 30px; margin-left: 24px; flex: none; }
.star { width: 32px; height: 32px; margin: 0 12px 0 24px; flex: none; }
.tools { display: flex; align-items: center; margin-left: 170px; }
.toolbtn { width: 64px; height: 64px; display: flex; align-items: center; justify-content: center; flex: none; }
.toolbtn svg { width: 32px; height: 32px; }
.toolbtn .ext-braces { height: 36px; }
.tool-sep { width: 2px; height: 66px; margin-left: 6px; background: #c8c8ca; display: block; }
.menu-btn { position: relative; margin-left: 28px; width: 26px; height: 32px; }
.menu-btn > svg { width: 26px; height: 32px; display: block; }
.menu-btn .update { position: absolute; width: 24px; height: 24px; left: 15px; top: -15px; }

/* page */
.page { height: 1322px; flex: none; display: flex; flex-direction: column; align-items: stretch; padding: 0 40px;
  background: linear-gradient(#ede3de calc(100% - 90px), #e2d8d2); border-radius: 0 0 12px 12px; }
.title { margin: 0; padding-top: 56px; text-align: center; font-family: "Open Sans", sans-serif; font-weight: 700; font-size: 64px; letter-spacing: -1.500px; line-height: 90px; color: #143d6b; }
.welcome { margin: 0; padding-top: 96px; text-align: center; font-family: "Open Sans", sans-serif; font-weight: 700; font-size: 46px; line-height: 60px; color: #143d6b; }
.board { display: grid; grid-template-columns: 720px 1fr 720px; gap: 80px; height: 800px; margin-top: 78px; }
.card { background: #fff; border-radius: 20px; }
.chat, .note { display: flex; flex-direction: column; }
.panel-head { margin: 0; height: 67px; line-height: 61px; text-align: center; font-family: "Open Sans", sans-serif; font-weight: 700; font-size: 36px; color: #000; border-bottom: 4px solid #2d5b7c; flex: none; }
.messages { flex: 1; padding: 30px 10px 0; }
.msg { display: flex; gap: 10px; align-items: flex-start; }
.sender { font-family: "Open Sans", sans-serif; font-size: 30px; line-height: 38px; color: #000; }
.bubble { font-family: "Open Sans", sans-serif; font-size: 30px; line-height: 56px; height: 56px; padding: 0 10px; border-radius: 10px; background: #143d6b; color: #ede3de; white-space: nowrap; }
.send-row { display: flex; gap: 10px; padding: 0 40px; height: 80px; flex: none; margin: 0; }
.field { font-family: "Liberation Sans", sans-serif; font-size: 32px; border: 0; outline: 0; background: #d3d3d3; border-radius: 20px; padding: 0 20px 3px; color: #000; min-width: 0; }
.field::placeholder { color: #757575; opacity: 1; }
.send-row .field { flex: 1; }
.btn { font-family: "Liberation Sans", sans-serif; font-size: 32px; color: #fff; border: 0; border-radius: 20px; background: #ab3a60; padding: 0 0 3px; }
.send { width: 75px; flex: none; }
.users-head { margin-top: 61px; }
.users { margin: 0; padding: 0 0 0 40px; list-style: none; height: 86px; flex: none; display: flex; align-items: center; font-family: "Open Sans", sans-serif; font-size: 32px; color: #000; }
.middle { display: flex; flex-direction: column; gap: 40px; }
.add-card { display: flex; gap: 20px; padding: 60px 40px; flex: none; }
.add-field { flex: 1; height: 100px; }
.add { width: 234px; height: 100px; flex: none; }
.todo-card { flex: 1; padding: 40px; }
.todo-head { margin: 0; height: 68px; line-height: 60px; text-align: center; font-family: "Open Sans", sans-serif; font-weight: 700; font-size: 36px; color: #2d5b7c; border-bottom: 4px solid #2d5b7c; }
.note { background: #b9b0b2; }
.note-head { color: #143d6b; }
.note-box { position: relative; height: 559px; margin: 31px 40px 0; padding: 40px 41px 41px; background: #fff; border-radius: 20px; flex: none; }
.note-text { width: 100%; height: 100%; display: block; background: #fff; border: 2px solid #c8c8c8; outline: 0; margin: 0; resize: none; }
.grip { position: absolute; width: 26px; height: 26px; right: 44px; bottom: 44px; }
.note-actions { display: flex; justify-content: flex-end; gap: 40px; padding: 30px 40px 0; }
.note-btn { width: 140px; height: 80px; }
.credit { margin-top: auto; padding-bottom: 4px; text-align: center; font-family: "Open Sans", sans-serif; font-size: 25px; line-height: 34px; color: #143d6b; }

/* dock */
.desk { flex: 1; display: flex; padding: 4px 0 0 62px; }
.dock { width: 2436px; height: 90px; display: flex; padding: 8px 6px 0; border-radius: 12px 12px 0 0; background: linear-gradient(90deg, #45464c 0%, #4e5560 40%, #5e6a77 100%); }
.dock-item { width: 64px; height: 64px; flex: none; position: relative; }
.dock-item > svg { width: 64px; height: 64px; display: block; overflow: visible; }
.dock-item.on::after { content: ""; position: absolute; width: 6px; height: 6px; left: 29px; top: 64px; border-radius: 50%; background: #0a0a0a; }
.dock-sep { width: 2px; height: 60px; margin: 4px 13px 0; background: #23262c; display: block; flex: none; }
.dock-sep.short { height: 38px; margin-top: 14px; }
.cal-m { font: 9px "Liberation Sans", sans-serif; fill: #fff; }
.cal-d { font: 28px "Liberation Sans", sans-serif; fill: #111; }
.map-3d { font: 700 11px "Liberation Sans", sans-serif; fill: #666; }
.pages-t { font: 7px "Liberation Sans", sans-serif; fill: #fff; }
.badge-t { font: 14px "Liberation Sans", sans-serif; fill: #fff; }
.word-t { font: 22px "Liberation Sans", sans-serif; fill: #fff; }
.term-t { font: 13px "Liberation Mono", monospace; fill: #3ad05a; }
.pdf-t { font: 11px "Liberation Sans", sans-serif; fill: #777; }
```
